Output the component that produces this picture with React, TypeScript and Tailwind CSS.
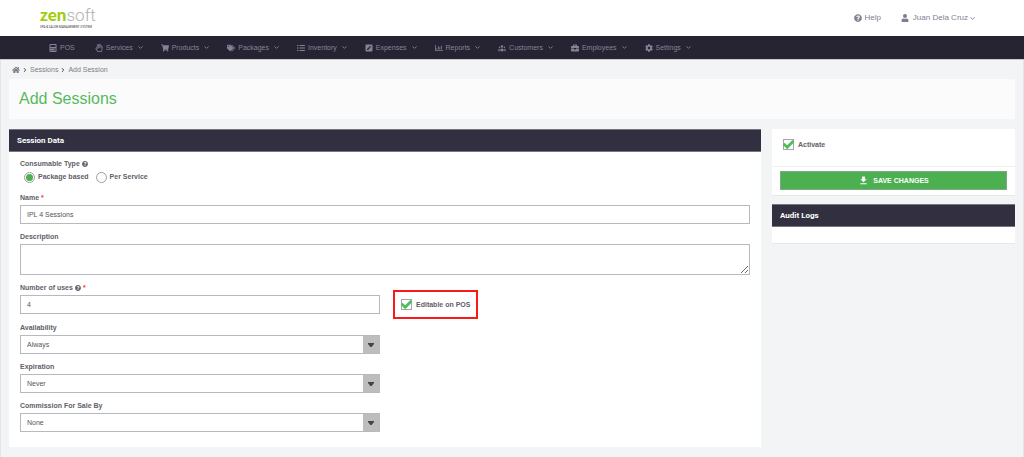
import { useState, type ReactNode } from "react";
import type { IconType } from "react-icons";
import {
  FaBriefcase,
  FaCalculator,
  FaCog,
  FaHome,
  FaListUl,
  FaPenSquare,
  FaQuestionCircle,
  FaRegChartBar,
  FaRegHandPaper,
  FaShoppingCart,
  FaTags,
  FaUser,
} from "react-icons/fa";
import { FiChevronDown, FiChevronRight } from "react-icons/fi";
import { HiUserGroup } from "react-icons/hi";
import { MdFileDownload } from "react-icons/md";

type NavItem = { label: string; icon: IconType; menu?: boolean };

const navItems: NavItem[] = [
  { label: "POS", icon: FaCalculator },
  { label: "Services", icon: FaRegHandPaper, menu: true },
  { label: "Products", icon: FaShoppingCart, menu: true },
  { label: "Packages", icon: FaTags, menu: true },
  { label: "Inventory", icon: FaListUl, menu: true },
  { label: "Expenses", icon: FaPenSquare, menu: true },
  { label: "Reports", icon: FaRegChartBar, menu: true },
  { label: "Customers", icon: HiUserGroup, menu: true },
  { label: "Employees", icon: FaBriefcase, menu: true },
  { label: "Settings", icon: FaCog, menu: true },
];

const fieldClass =
  "block w-full border border-[#b4bac0] bg-white px-1.5 text-[7px] leading-[10px] text-[#555] outline-none";

function Logo() {
  return (
    <a href="#" className="flex flex-col pb-0.5">
      <span className="flex text-[17px] leading-5">
        <span className="font-['Lato',sans-serif] font-black text-[#a2cd0c]">zen</span>
        <span className="font-['Roboto',sans-serif] font-light text-[#b0b0b0]">soft</span>
      </span>
      <span className="font-['Roboto',sans-serif] text-[3px] leading-1 whitespace-nowrap text-[#333]">
        SPA &amp; SALON MANAGEMENT SYSTEM
      </span>
    </a>
  );
}

function Required() {
  return <span className="text-[#f33]">*</span>;
}

function Field({ id, label, children }: { id: string; label: ReactNode; children: ReactNode }) {
  return (
    <div>
      <label htmlFor={id} className="mb-0.5 flex items-center gap-0.5 leading-[10px] font-bold">
        {label}
      </label>
      {children}
    </div>
  );
}

function SelectField({ id, label, options }: { id: string; label: string; options: string[] }) {
  return (
    <Field id={id} label={label}>
      <div className="relative w-[calc(50%-5px)]">
        <select id={id} className={`${fieldClass} h-[19px] appearance-none pr-5`}>
          {options.map((option) => (
            <option key={option}>{option}</option>
          ))}
        </select>
        <span className="pointer-events-none absolute inset-y-px right-px flex w-4 items-center justify-center bg-[#bdbdbd]">
          <svg viewBox="0 0 6 4" className="h-1 w-1.5 fill-[#444]">
            <path d="M0 0h6v1L3.6 4H2.4L0 1z" />
          </svg>
        </span>
      </div>
    </Field>
  );
}

function Checkbox({ label }: { label: string }) {
  const [checked, setChecked] = useState(true);

  return (
    <label className="flex items-center gap-1 font-bold">
      <span className="relative block size-[11px]">
        <input
          type="checkbox"
          checked={checked}
          onChange={() => setChecked(!checked)}
          className="block size-full appearance-none border border-[#a5a5b0] bg-white"
        />
        {checked && (
          <svg viewBox="0 0 11 11" className="pointer-events-none absolute inset-0 overflow-visible">
            <path d="M.6 4.8 4.2 8.2 10.4 2" fill="none" stroke="#52bd58" strokeWidth="2.8" />
          </svg>
        )}
      </span>
      {label}
    </label>
  );
}

function Radio({ label, defaultChecked }: { label: string; defaultChecked?: boolean }) {
  return (
    <label className="flex items-center gap-[3px] font-bold">
      <input
        type="radio"
        name="consumable-type"
        defaultChecked={defaultChecked}
        className="size-[11px] appearance-none rounded-full border border-[#9c9ca6] bg-white bg-clip-content p-px checked:bg-[#4caf50]"
      />
      {label}
    </label>
  );
}

function PanelTitle({ children }: { children: ReactNode }) {
  return (
    <h2 className="border-y border-[#77767f] bg-[#323040] px-2 font-['Roboto',sans-serif] text-[8px] leading-[21px] font-bold text-white">
      {children}
    </h2>
  );
}

export default function App() {
  return (
    <div className="flex min-h-screen flex-col bg-[#f3f4f6] font-['Liberation_Sans',Arial,sans-serif] text-[7px] leading-[10px] text-[#5f6068]">
      <header className="flex h-9 items-center justify-between bg-white pr-12 pl-10 text-[8px] text-[#7f7f8f]">
        <Logo />
        <div className="flex items-center gap-5">
          <a href="#" className="flex items-center gap-0.5">
            <FaQuestionCircle className="size-2" />
            Help
          </a>
          <button type="button" className="flex items-center gap-1">
            <FaUser className="size-2" />
            <span className="flex items-center gap-px">
              Juan Dela Cruz
              <FiChevronDown className="size-[7px] stroke-3" />
            </span>
          </button>
        </div>
      </header>

      <nav className="flex h-6 items-center gap-[17px] border-b border-[#c9c9cc] bg-[#262432] pl-[49px] text-[#85839a]">
        {navItems.map(({ label, icon: Icon, menu }) => (
          <a key={label} href="#" className={menu ? "flex items-center" : "mr-[3px] flex items-center"}>
            <Icon className="mr-[3px] size-2" />
            {label}
            {menu && <FiChevronDown className="ml-1 size-[7px] stroke-3" />}
          </a>
        ))}
      </nav>

      <div className="flex-1 border-x border-[#e4e4e8] px-2">
        <div className="flex h-[19px] items-center gap-0.5 px-[3px] text-[#7c7c88]">
          <a href="#" aria-label="Home">
            <FaHome className="size-2" />
          </a>
          <FiChevronRight className="size-1.5 stroke-4 text-[#444]" />
          <a href="#">Sessions</a>
          <FiChevronRight className="size-1.5 stroke-4 text-[#444]" />
          <span>Add Session</span>
        </div>

        <main>
          <h1 className="bg-[#fbfbfb] px-[10px] text-[16px] leading-[40px] text-[#58b95e]">Add Sessions</h1>

          <div className="mt-[10px] grid grid-cols-[minmax(0,1fr)_243px] items-start gap-[11px]">
            <section className="bg-white">
              <PanelTitle>Session Data</PanelTitle>
              <form className="flex flex-col gap-2 px-[11px] pt-[7px] pb-[15px]">
                <fieldset>
                  <legend className="flex items-center gap-0.5 font-bold">
                    Consumable Type <FaQuestionCircle className="size-1.5" />
                  </legend>
                  <div className="flex h-4 items-center gap-[7px] px-1">
                    <Radio label="Package based" defaultChecked />
                    <Radio label="Per Service" />
                  </div>
                </fieldset>

                <Field id="name" label={<>Name <Required /></>}>
                  <input id="name" defaultValue="IPL 4 Sessions" className={`${fieldClass} h-[19px]`} />
                </Field>

                <Field id="description" label="Description">
                  <textarea id="description" className={`${fieldClass} h-[31px]`} />
                </Field>

                <div className="mb-px">
                  <Field
                    id="uses"
                    label={<>Number of uses <FaQuestionCircle className="size-1.5" /> <Required /></>}
                  >
                    <div className="flex items-center gap-[13px]">
                      <div className="w-[calc(50%-5px)]">
                        <input id="uses" defaultValue="4" className={`${fieldClass} h-[19px]`} />
                      </div>
                      <div className="-my-[5px] flex h-[29px] items-center border-2 border-[#f91919] px-1.5">
                        <Checkbox label="Editable on POS" />
                      </div>
                    </div>
                  </Field>
                </div>

                <SelectField id="availability" label="Availability" options={["Always"]} />
                <SelectField id="expiration" label="Expiration" options={["Never"]} />
                <SelectField id="commission" label="Commission For Sale By" options={["None"]} />
              </form>
            </section>

            <aside className="flex flex-col gap-2">
              <section className="border-b border-[#e8e8ec] bg-white">
                <div className="h-[38px] border-b border-[#f0f0f0] px-[11px] pt-[10px]">
                  <Checkbox label="Activate" />
                </div>
                <div className="px-2 pt-1 pb-[5px]">
                  <button
                    type="button"
                    className="flex h-[19px] w-full items-center justify-center gap-1 border border-[#7fa886] bg-[#4caf50] font-bold text-white"
                  >
                    <MdFileDownload className="size-[11px]" />
                    SAVE CHANGES
                  </button>
                </div>
              </section>

              <section className="border-b border-[#e8e8ec] bg-white">
                <PanelTitle>Audit Logs</PanelTitle>
                <div className="h-4" />
              </section>
            </aside>
          </div>
        </main>
      </div>
    </div>
  );
}
